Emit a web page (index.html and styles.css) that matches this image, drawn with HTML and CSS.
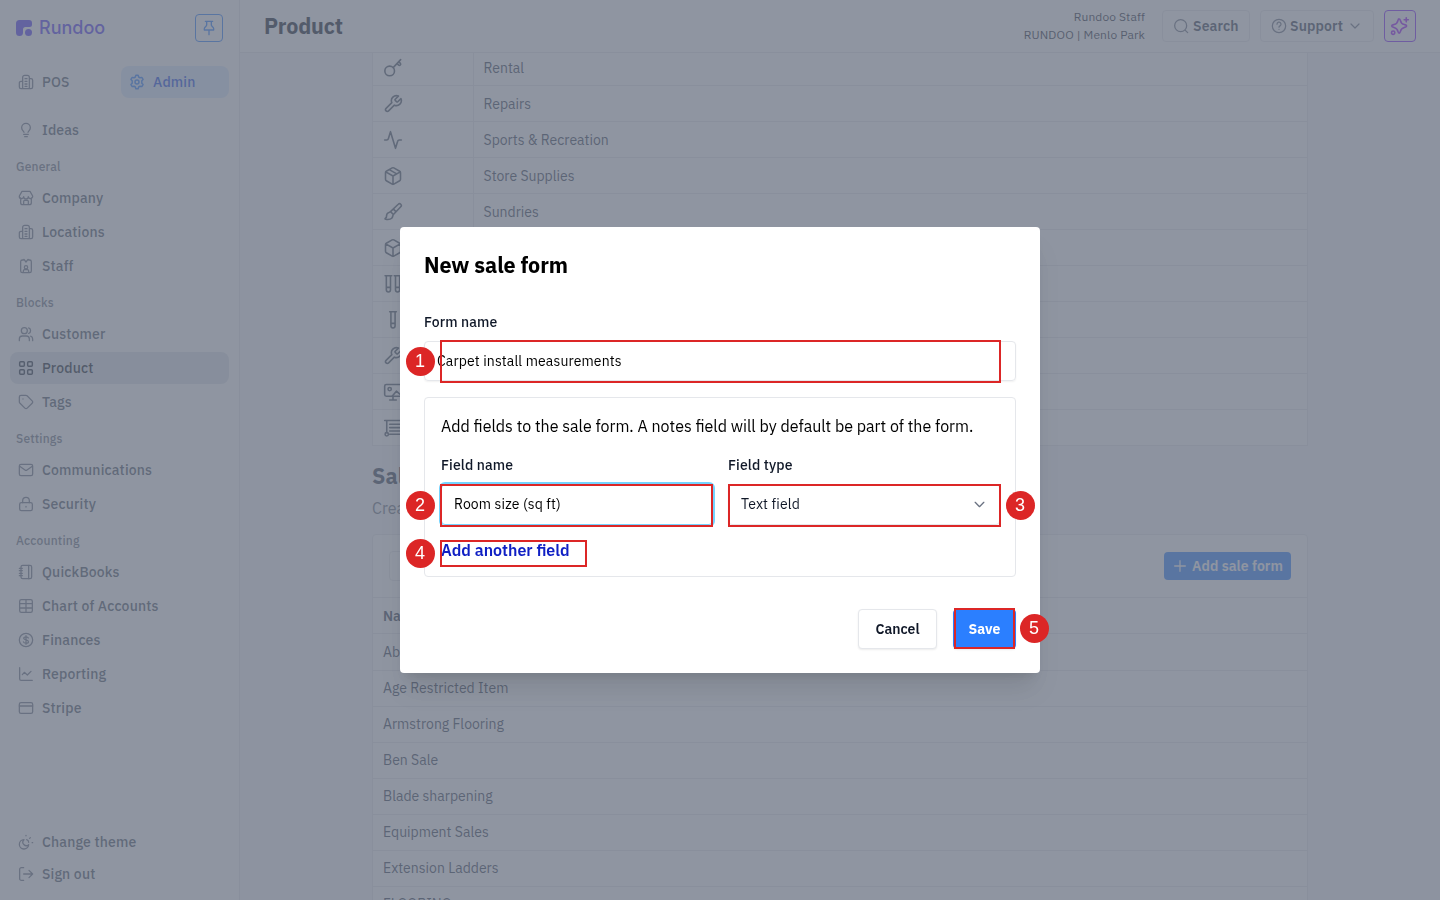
FILE: index.html
```html
<!DOCTYPE html>
<html lang="en">
<head>
  <meta charset="utf-8">
  <title>Product - Rundoo</title>
  <meta name="viewport" content="width=device-width, initial-scale=1">
  <link rel="stylesheet" href="styles.css">
</head>
<body>
  <svg class="sprite" aria-hidden="true">
    <symbol id="pin" viewBox="0 0 24 24"><path d="M12 15v7M6.500 2h11M8.500 2v5.500c0 2-3.500 3.500-3.500 5.500v2h14v-2c0-2-3.500-3.500-3.500-5.500V2"/></symbol>
    <symbol id="building" viewBox="0 0 24 24"><path d="M7 22H4.500A2.500 2.500 0 0 1 2 19.500v-6A2.500 2.500 0 0 1 4.500 11H7M17 7h2.500A2.500 2.500 0 0 1 22 9.500v10a2.500 2.500 0 0 1-2.500 2.500H7V5a3 3 0 0 1 3-3h4a3 3 0 0 1 3 3v17M10.500 7h3M10.500 11h3M10.500 15h3M10.500 18.500h3"/></symbol>
    <symbol id="settings" viewBox="0 0 24 24"><circle cx="12" cy="12" r="3"/><path d="M9.500 4.500 10.300 2h3.400l.8 2.500 2 1.200 2.700-.6 1.900 3-1.900 2.100v3.600l1.900 2.100-1.900 3-2.700-.6-2 1.200-.8 2.500h-3.400l-.8-2.500-2-1.200-2.700.6-1.900-3 1.900-2.100v-3.600L2.900 8.100l1.900-3 2.700.6z"/></symbol>
    <symbol id="bulb" viewBox="0 0 24 24"><path d="M9 15.500c0-1.500-3.500-3-3.500-7a6.500 6.500 0 0 1 13 0c0 4-3.500 5.500-3.500 7M8.500 18.500h7M10 22h4"/></symbol>
    <symbol id="store" viewBox="0 0 24 24"><path d="M4 12v7a3 3 0 0 0 3 3h10a3 3 0 0 0 3-3v-7M6 2h12l4 7a3.300 3.300 0 0 1-6.600 1 3.400 3.400 0 0 1-6.800 0A3.300 3.300 0 0 1 2 9zM8.500 22v-5a1.500 1.500 0 0 1 1.500-1.500h4a1.500 1.500 0 0 1 1.500 1.500v5"/></symbol>
    <symbol id="badge" viewBox="0 0 24 24"><path d="M8 3H6.500A2.500 2.500 0 0 0 4 5.500v14A2.500 2.500 0 0 0 6.500 22h11a2.500 2.500 0 0 0 2.500-2.500v-14A2.500 2.500 0 0 0 17.500 3H16M9 2l3 4 3-4M8 22v-2.500a2 2 0 0 1 2-2h4a2 2 0 0 1 2 2V22"/><circle cx="12" cy="14" r="2.500"/></symbol>
    <symbol id="users" viewBox="0 0 24 24"><circle cx="9.500" cy="7" r="4.500"/><path d="M2 22v-2.500A4.500 4.500 0 0 1 6.500 15h6a4.500 4.500 0 0 1 4.500 4.500V22M16 2.800a4.500 4.500 0 0 1 0 8.400M22 22v-2.500a4.500 4.500 0 0 0-3-4.200"/></symbol>
    <symbol id="grid" viewBox="0 0 24 24"><rect x="2.500" y="2.500" width="7" height="7" rx="1.500"/><rect x="14.500" y="2.500" width="7" height="7" rx="1.500"/><rect x="2.500" y="14.500" width="7" height="7" rx="1.500"/><rect x="14.500" y="14.500" width="7" height="7" rx="1.500"/></symbol>
    <symbol id="tag" viewBox="0 0 24 24"><path d="M2 4.500A2.500 2.500 0 0 1 4.500 2h7.300a2.500 2.500 0 0 1 1.800.7l7.600 7.600a2.500 2.500 0 0 1 0 3.500l-7.400 7.400a2.500 2.500 0 0 1-3.500 0l-7.600-7.600A2.500 2.500 0 0 1 2 11.800zM7.500 7.500h.01"/></symbol>
    <symbol id="mail" viewBox="0 0 24 24"><rect x="2" y="3.500" width="20" height="17" rx="2.500"/><path d="m2.500 6.500 8 5.500a2.500 2.500 0 0 0 3 0l8-5.500"/></symbol>
    <symbol id="lock" viewBox="0 0 24 24"><rect x="2.500" y="10" width="19" height="12" rx="2.500"/><path d="M7 10V7a5 5 0 0 1 10 0v3M12 15.500v1"/></symbol>
    <symbol id="book" viewBox="0 0 24 24"><rect x="4.500" y="2" width="16" height="20" rx="2.500"/><path d="M16 2v20M2 6.500h4.500M2 10h4.500M2 14h4.500M2 17.500h4.500"/></symbol>
    <symbol id="table" viewBox="0 0 24 24"><rect x="2.500" y="2.500" width="19" height="19" rx="2.500"/><path d="M2.500 8.500h19M2.500 15h19M12 2.500v19"/></symbol>
    <symbol id="dollar" viewBox="0 0 24 24"><circle cx="12" cy="12" r="10"/><path d="M15.500 9c-.4-1.200-1.700-1.800-3.500-1.800-2 0-3.500.8-3.500 2.300 0 3.300 7.200 1.600 7.200 5 0 1.500-1.500 2.300-3.700 2.300-2 0-3.400-.7-3.800-2M12 5.500v13"/></symbol>
    <symbol id="chart" viewBox="0 0 24 24"><path d="M2.500 2.500v17a2 2 0 0 0 2 2h17M6.500 13l3-3.500 4.500 4L19.500 8"/></symbol>
    <symbol id="card" viewBox="0 0 24 24"><rect x="2" y="4" width="20" height="16" rx="2.500"/><path d="M2 9h20"/></symbol>
    <symbol id="theme" viewBox="0 0 24 24"><path d="M9 8.500A7 7 0 1 0 16 16 5 5 0 0 1 9 8.500zM12 2v.8M18.500 5.500l-1 1M21.200 13h.8M13 8.500a4.200 4.200 0 0 1 3 4"/></symbol>
    <symbol id="logout" viewBox="0 0 24 24"><path d="M8.500 2.500H5A2.500 2.500 0 0 0 2.500 5v14A2.500 2.500 0 0 0 5 21.500h3.500M8.500 12H22M16.500 6.500 22 12l-5.500 5.500"/></symbol>
    <symbol id="search" viewBox="0 0 24 24"><circle cx="11.500" cy="11.500" r="9"/><path d="m18.500 18.500 3.500 3.500"/></symbol>
    <symbol id="help" viewBox="0 0 24 24"><circle cx="12" cy="12" r="10"/><path d="M9 9.300a3 3 0 1 1 4.500 2.500c-1 .6-1.500 1-1.500 2M12 17v.01"/></symbol>
    <symbol id="down" viewBox="0 0 24 24"><path d="m4 8 8 8 8-8"/></symbol>
    <symbol id="sparkle" viewBox="0 0 24 24"><path d="M11 3.500c.8 0 1.200.7 1.400 1.700.7 3.300 1.400 4.200 4.700 5.100 1.400.3 2.900.5 2.900 1.700s-1.500 1.400-2.900 1.700c-3.300.9-4 1.800-4.700 5.100-.2 1-.6 1.700-1.400 1.700s-1.200-.7-1.400-1.700c-.7-3.300-1.400-4.200-4.700-5.100-1.400-.3-2.900-.5-2.900-1.700s1.500-1.400 2.900-1.700c3.300-.9 4-1.800 4.700-5.100.2-1 .6-1.700 1.400-1.700zM19.500 2v5M17 4.500h5"/><circle cx="3.800" cy="20" r="2"/></symbol>
    <symbol id="key" viewBox="0 0 24 24"><circle cx="8" cy="15.500" r="5.800"/><path d="m12.200 11.500 9-9.500M17 6.800l1.800 1.800a1.500 1.500 0 0 0 2.100-2.100L19 4.500"/></symbol>
    <symbol id="wrench" viewBox="0 0 24 24"><path d="M14.700 6.300a1 1 0 0 0 0 1.400l1.600 1.600a1 1 0 0 0 1.400 0l3.800-3.800a6 6 0 0 1-7.900 7.900l-6.900 6.900a2.100 2.100 0 0 1-3-3l6.900-6.900a6 6 0 0 1 7.900-7.900z"/></symbol>
    <symbol id="activity" viewBox="0 0 24 24"><path d="M2 12h2.500a2 2 0 0 0 1.900-1.500L9 2l6 20 2.600-8.500a2 2 0 0 1 1.900-1.500H22"/></symbol>
    <symbol id="package" viewBox="0 0 24 24"><path d="M21 8a2 2 0 0 0-1-1.700l-7-4a2 2 0 0 0-2 0l-7 4A2 2 0 0 0 3 8v8a2 2 0 0 0 1 1.700l7 4a2 2 0 0 0 2 0l7-4a2 2 0 0 0 1-1.700zM3.300 7l8.700 5 8.700-5M12 22V12M7.500 4.300l9 5.100"/></symbol>
    <symbol id="brush" viewBox="0 0 24 24"><path d="m9 11.500 9.300-8.800a2 2 0 0 1 3 3L12.500 15zM9 11.500 6.500 13c-2.500.5-2 3-2.500 5.500L2.500 20c0 1.500 6 1.500 8-.5 1.500-1.500 1-3.500 2-4.500M12.500 8.500l3 3"/></symbol>
    <symbol id="cube" viewBox="0 0 24 24"><path d="M21 8a2 2 0 0 0-1-1.700l-7-4a2 2 0 0 0-2 0l-7 4A2 2 0 0 0 3 8v8a2 2 0 0 0 1 1.700l7 4a2 2 0 0 0 2 0l7-4a2 2 0 0 0 1-1.700zM3.300 7l8.700 5 8.700-5M12 22V12"/></symbol>
    <symbol id="tubes" viewBox="0 0 24 24"><path d="M9 2v17a2.500 2.500 0 0 1-5 0V2M2.500 2h8M20 2v17a2.500 2.500 0 0 1-5 0V2M13.500 2h8M4 16h5M15 16h5"/></symbol>
    <symbol id="tube" viewBox="0 0 24 24"><path d="M14.500 2v17a2.500 2.500 0 0 1-5 0V2M8 2h8M9.500 16h5"/></symbol>
    <symbol id="screen" viewBox="0 0 24 24"><rect x="2" y="3" width="20" height="14" rx="2"/><circle cx="8" cy="8.500" r="2"/><path d="M12 17v4.500M8 21.500h8M11 17l5-6 6 5"/></symbol>
    <symbol id="lines" viewBox="0 0 24 24"><path d="M2 3h20M4.500 3v14M8 7.500h14M8 11.500h14M8 15.500h14M8 19.500h14"/><circle cx="4.500" cy="19.500" r="2"/></symbol>
    <symbol id="plus" viewBox="0 0 24 24"><path d="M12 4v16M4 12h16"/></symbol>
  </svg>

  <div class="app">
    <aside class="sidebar">
      <div class="brand">
        <svg class="logo" viewBox="0 0 16 16"><path d="M3.500 0H13a3 3 0 0 1 3 3v1.500A2.500 2.500 0 0 1 13.500 7H9.500A2.500 2.500 0 0 0 7 9.500v3A3.500 3.500 0 0 1 0 12.500v-9A3.500 3.500 0 0 1 3.500 0z"/><circle cx="12.500" cy="12.500" r="3.500"/></svg>
        <span class="brand-name">Rundoo</span>
        <button class="pin"><svg class="icon"><use href="#pin"/></svg></button>
      </div>
      <div class="modes">
        <a class="item"><svg class="icon"><use href="#building"/></svg>POS</a>
        <a class="item mode-active"><svg class="icon"><use href="#settings"/></svg>Admin</a>
      </div>
      <nav class="nav">
        <a class="item"><svg class="icon"><use href="#bulb"/></svg>Ideas</a>
        <h4 class="group">General</h4>
        <a class="item"><svg class="icon"><use href="#store"/></svg>Company</a>
        <a class="item"><svg class="icon"><use href="#building"/></svg>Locations</a>
        <a class="item"><svg class="icon"><use href="#badge"/></svg>Staff</a>
        <h4 class="group">Blocks</h4>
        <a class="item"><svg class="icon"><use href="#users"/></svg>Customer</a>
        <a class="item active"><svg class="icon"><use href="#grid"/></svg>Product</a>
        <a class="item"><svg class="icon"><use href="#tag"/></svg>Tags</a>
        <h4 class="group">Settings</h4>
        <a class="item"><svg class="icon"><use href="#mail"/></svg>Communications</a>
        <a class="item"><svg class="icon"><use href="#lock"/></svg>Security</a>
        <h4 class="group">Accounting</h4>
        <a class="item"><svg class="icon"><use href="#book"/></svg>QuickBooks</a>
        <a class="item"><svg class="icon"><use href="#table"/></svg>Chart of Accounts</a>
        <a class="item"><svg class="icon"><use href="#dollar"/></svg>Finances</a>
        <a class="item"><svg class="icon"><use href="#chart"/></svg>Reporting</a>
        <a class="item"><svg class="icon"><use href="#card"/></svg>Stripe</a>
      </nav>
      <div class="account">
        <a class="item"><svg class="icon"><use href="#theme"/></svg>Change theme</a>
        <a class="item"><svg class="icon"><use href="#logout"/></svg>Sign out</a>
      </div>
    </aside>

    <div class="page">
      <header class="topbar">
        <h1 class="page-title">Product</h1>
        <div class="who"><span>Rundoo Staff</span><span>RUNDOO | Menlo Park</span></div>
        <button class="top-button search"><svg class="icon"><use href="#search"/></svg>Search</button>
        <button class="top-button support"><svg class="icon"><use href="#help"/></svg>Support<svg class="icon chevron"><use href="#down"/></svg></button>
        <button class="ai"><svg class="icon"><use href="#sparkle"/></svg></button>
      </header>

      <main class="content">
        <div class="departments">
          <div class="dept"><span><svg class="icon"><use href="#key"/></svg></span><span>Rental</span></div>
          <div class="dept"><span><svg class="icon"><use href="#wrench"/></svg></span><span>Repairs</span></div>
          <div class="dept"><span><svg class="icon"><use href="#activity"/></svg></span><span>Sports &amp; Recreation</span></div>
          <div class="dept"><span><svg class="icon"><use href="#package"/></svg></span><span>Store Supplies</span></div>
          <div class="dept"><span><svg class="icon"><use href="#brush"/></svg></span><span>Sundries</span></div>
          <div class="dept"><span><svg class="icon"><use href="#cube"/></svg></span><span></span></div>
          <div class="dept"><span><svg class="icon"><use href="#tubes"/></svg></span><span></span></div>
          <div class="dept"><span><svg class="icon"><use href="#tube"/></svg></span><span></span></div>
          <div class="dept"><span><svg class="icon"><use href="#wrench"/></svg></span><span></span></div>
          <div class="dept"><span><svg class="icon"><use href="#screen"/></svg></span><span></span></div>
          <div class="dept"><span><svg class="icon"><use href="#lines"/></svg></span><span></span></div>
        </div>

        <h2 class="section-title">Sale</h2>
        <p class="section-text">Create</p>

        <div class="forms">
          <div class="toolbar">
            <div class="filter"></div>
            <button class="add"><svg class="icon"><use href="#plus"/></svg>Add sale form</button>
          </div>
          <div class="form-row form-head">Name</div>
          <div class="form-row first">Absolute</div>
          <div class="form-row">Age Restricted Item</div>
          <div class="form-row">Armstrong Flooring</div>
          <div class="form-row">Ben Sale</div>
          <div class="form-row">Blade sharpening</div>
          <div class="form-row">Equipment Sales</div>
          <div class="form-row">Extension Ladders</div>
          <div class="form-row">FLOORING</div>
        </div>
      </main>
    </div>
  </div>

  <div class="overlay">
    <div class="modal">
      <h2 class="modal-title">New sale form</h2>
      <label class="label">Form name</label>
      <div class="input">Carpet install measurements</div>
      <div class="fields">
        <p class="hint">Add fields to the sale form. A notes field will by default be part of the form.</p>
        <div class="field-row">
          <div>
            <label class="label">Field name</label>
            <div class="input focused">Room size (sq ft)</div>
          </div>
          <div>
            <label class="label">Field type</label>
            <div class="input select">Text field<svg class="icon"><use href="#down"/></svg></div>
          </div>
        </div>
        <a class="another">Add another field</a>
      </div>
      <div class="actions">
        <button class="button cancel">Cancel</button>
        <button class="button save">Save</button>
      </div>

      <!-- numbered step callouts -->
      <div class="mark mark-1"></div><div class="step step-1">1</div>
      <div class="mark mark-2"></div><div class="step step-2">2</div>
      <div class="mark mark-3"></div><div class="step step-3">3</div>
      <div class="mark mark-4"></div><div class="step step-4">4</div>
      <div class="mark mark-5"></div><div class="step step-5">5</div>
    </div>
  </div>
</body>
</html>
```
FILE: styles.css
```css
* {
  box-sizing: border-box;
  margin: 0;
  padding: 0;
}

body {
  height: 900px;
  overflow: hidden;
  color: #101828;
  font-family: "IBM Plex Sans", Roboto, sans-serif;
  font-size: 14px;
  line-height: 20px;
}

button {
  font: inherit;
  letter-spacing: inherit;
}

.sprite {
  display: none;
}

.icon {
  flex: none;
  width: 16px;
  height: 16px;
  fill: none;
  stroke: currentColor;
  stroke-width: 1.9;
  stroke-linecap: round;
  stroke-linejoin: round;
}

.app {
  display: flex;
  height: 900px;
}

/* sidebar */
.sidebar {
  display: flex;
  flex-direction: column;
  width: 240px;
  padding: 14px 10px 10px;
  border-right: 1px solid #e5e7eb;
}

.brand {
  display: flex;
  align-items: center;
  height: 28px;
  padding: 0 6px;
}

.logo {
  width: 16px;
  height: 16px;
  fill: #4f39f6;
}

.brand-name {
  margin-left: 7px;
  color: #4f39f6;
  font-family: Inter, sans-serif;
  font-size: 18px;
  font-weight: 500;
}

.pin {
  display: flex;
  align-items: center;
  justify-content: center;
  width: 28px;
  height: 28px;
  margin-left: auto;
  border: 1px solid #2b7fff;
  border-radius: 4px;
  background: none;
  color: #2b7fff;
}

.pin .icon {
  stroke-width: 2;
}

.modes {
  display: grid;
  grid-template-columns: 108px 108px;
  gap: 3px;
  margin: 24px 0 16px;
}

.nav {
  display: flex;
  flex-direction: column;
  gap: 2px;
}

.item {
  display: flex;
  align-items: center;
  gap: 8px;
  height: 32px;
  padding-left: 8px;
  border-radius: 8px;
  color: #4a5565;
  font-weight: 500;
  letter-spacing: 0.16px;
}

.item .icon {
  color: #6a7282;
}

.mode-active {
  background: #dbeafe;
  color: #1447e6;
}

.mode-active .icon {
  color: #2b7fff;
  stroke-width: 2.2;
}

.active {
  background: #e0e4ea;
  color: #101828;
}

.active .icon {
  color: #1e2939;
  stroke-width: 2.2;
}

.group {
  height: 32px;
  padding: 9px 6px 0;
  color: #6a7282;
  font-size: 12px;
  font-weight: 500;
  letter-spacing: 0.2px;
}

.account {
  margin-top: auto;
}

/* top bar */
.page {
  flex: 1;
  display: flex;
  flex-direction: column;
  min-width: 0;
  background: #f6f7f9;
}

.topbar {
  display: flex;
  flex: none;
  align-items: center;
  height: 53px;
  padding: 0 24px;
  border-bottom: 1px solid #e5e7eb;
  background: #fff;
}

.page-title {
  margin-right: auto;
  font-size: 21.5px;
  font-weight: 700;
  letter-spacing: -0.15px;
}

.who {
  display: flex;
  flex-direction: column;
  margin-right: 17px;
  color: #1e2939;
  font-size: 12px;
  line-height: 18px;
  text-align: right;
  letter-spacing: 0.12px;
}

.top-button {
  display: flex;
  align-items: center;
  gap: 4px;
  height: 32px;
  margin-right: 10px;
  padding-left: 10px;
  border: 1px solid #e5e7eb;
  border-radius: 4px;
  background: #fff;
  color: #364153;
  font-weight: 600;
  letter-spacing: 0.1px;
}

.top-button .icon {
  color: #6a7282;
}

.search {
  width: 88px;
}

.support {
  width: 114px;
  gap: 3px;
}

.support .chevron {
  width: 12px;
  height: 12px;
  margin-left: 3px;
  stroke-width: 2.4;
}

.ai {
  display: flex;
  align-items: center;
  justify-content: center;
  width: 32px;
  height: 32px;
  border: 1px solid #7f22fe;
  border-radius: 4px;
  background: #faf5ff;
  color: #9810fa;
}

.ai .icon {
  width: 20px;
  height: 20px;
}

/* page content */
.content {
  width: 936px;
  min-height: 0;
  margin: 0 auto;
  overflow: hidden;
}

.departments {
  /* list is scrolled under the top bar */
  margin-top: -3px;
  border-left: 1px solid #e5e7eb;
  border-right: 1px solid #e5e7eb;
  background: #fff;
}

.dept {
  display: grid;
  grid-template-columns: 100px 1fr;
  height: 36px;
  border-bottom: 1px solid #e5e7eb;
  color: #364153;
}

.dept span {
  display: flex;
  align-items: center;
  padding-left: 10px;
}

.dept span + span {
  padding-left: 9.5px;
  border-left: 1px solid #e5e7eb;
}

.dept .icon {
  width: 20px;
  height: 20px;
  color: #4a5565;
}

.section-title {
  margin-top: 16px;
  color: #364153;
  font-size: 21.5px;
  font-weight: 700;
  line-height: 28px;
}

.section-text {
  margin-top: 6px;
  color: #6a7282;
  font-size: 16px;
  line-height: 24px;
}

.forms {
  margin-top: 14px;
  border: 1px solid #e5e7eb;
  border-radius: 4px;
  background: #fff;
}

.toolbar {
  display: flex;
  align-items: center;
  justify-content: space-between;
  height: 63px;
  padding: 0 16px;
  border-bottom: 1px solid #e5e7eb;
}

.filter {
  width: 240px;
  height: 30px;
  border: 1px solid #e5e7eb;
  border-radius: 4px;
}

.add {
  display: flex;
  align-items: center;
  gap: 4px;
  width: 127px;
  height: 28px;
  padding-left: 8px;
  border: 0;
  border-radius: 4px;
  background: #2b7fff;
  color: #fff;
  font-weight: 600;
  letter-spacing: 0.05px;
  white-space: nowrap;
}

.form-row {
  height: 36px;
  padding: 7px 10px 0;
  border-bottom: 1px solid #e5e7eb;
  color: #364153;
}

.form-head {
  padding-top: 8px;
  font-weight: 600;
}

.form-row.first {
  height: 37px;
  padding-top: 8px;
}

/* modal */
.overlay {
  position: fixed;
  inset: 0;
  display: flex;
  align-items: center;
  justify-content: center;
  background: rgba(106, 114, 130, 0.75);
}

.modal {
  position: relative;
  width: 640px;
  height: 446px;
  padding: 24px;
  border-radius: 4px;
  background: #fff;
  box-shadow: 0 20px 25px -5px rgba(0, 0, 0, 0.1), 0 8px 10px -6px rgba(0, 0, 0, 0.1);
}

.modal-title {
  margin-bottom: 33px;
  color: #000;
  font-size: 21.5px;
  font-weight: 700;
  line-height: 28px;
  letter-spacing: -0.1px;
}

.label {
  display: block;
  height: 20px;
  margin-bottom: 9px;
  font-weight: 500;
  letter-spacing: 0.12px;
}

.input {
  display: flex;
  align-items: center;
  justify-content: space-between;
  height: 40px;
  padding: 0 12px;
  border: 1px solid #e5e7eb;
  border-radius: 4px;
  box-shadow: 0 1px 2px rgba(0, 0, 0, 0.06);
  color: #000;
  letter-spacing: 0.13px;
}

.fields {
  height: 180px;
  margin-top: 16px;
  padding: 16px;
  border: 1px solid #e5e7eb;
  border-radius: 4px;
}

.hint {
  color: #000;
  font-size: 16px;
  line-height: 24px;
  white-space: nowrap;
}

.field-row {
  display: grid;
  grid-template-columns: 272px 272px;
  gap: 15px;
  margin-top: 17px;
}

.field-row .input {
  height: 41px;
  padding-bottom: 1px;
}

.field-row .focused {
  border-color: #74d4ff;
  box-shadow: 0 0 0 2px #74d4ff;
}

.select {
  color: #101828;
}

.select .icon {
  width: 13px;
  height: 13px;
  margin-right: 1px;
  color: #6a7282;
  stroke-width: 2.4;
}

.another {
  display: block;
  margin-top: 13px;
  color: #0f1fc4;
  font-size: 16px;
  font-weight: 600;
  line-height: 24px;
}

.actions {
  display: flex;
  justify-content: flex-end;
  gap: 16px;
  margin-top: 32px;
}

.button {
  height: 40px;
  border: 1px solid #e5e7eb;
  border-radius: 4px;
  background: #fff;
  box-shadow: 0 1px 2px rgba(0, 0, 0, 0.08);
  color: #101828;
  font-weight: 600;
}

.cancel {
  width: 79px;
}

.save {
  width: 63px;
  border-color: #2b7fff;
  background: #2b7fff;
  color: #fff;
  font-weight: 700;
}

/* callouts, placed over the modal */
.mark {
  position: absolute;
  border: 2px solid #dc2626;
}

.step {
  position: absolute;
  width: 29px;
  height: 29px;
  padding-right: 1px;
  border-radius: 50%;
  background: #dc2626;
  color: #fff;
  font-family: "Liberation Sans", Arial, sans-serif;
  font-size: 18px;
  line-height: 29px;
  text-align: center;
}

.mark-1 { left: 40px; top: 113px; width: 561px; height: 43px; }
.mark-2 { left: 40px; top: 257px; width: 273px; height: 43px; }
.mark-3 { left: 328px; top: 257px; width: 273px; height: 43px; }
.mark-4 { left: 40px; top: 313px; width: 147px; height: 27px; }
.mark-5 { left: 554px; top: 381px; width: 61px; height: 41px; }
.step-1 { left: 6px; top: 120px; }
.step-2 { left: 6px; top: 264px; }
.step-3 { left: 606px; top: 264px; }
.step-4 { left: 6px; top: 312px; }
.step-5 { left: 620px; top: 387px; }
```
